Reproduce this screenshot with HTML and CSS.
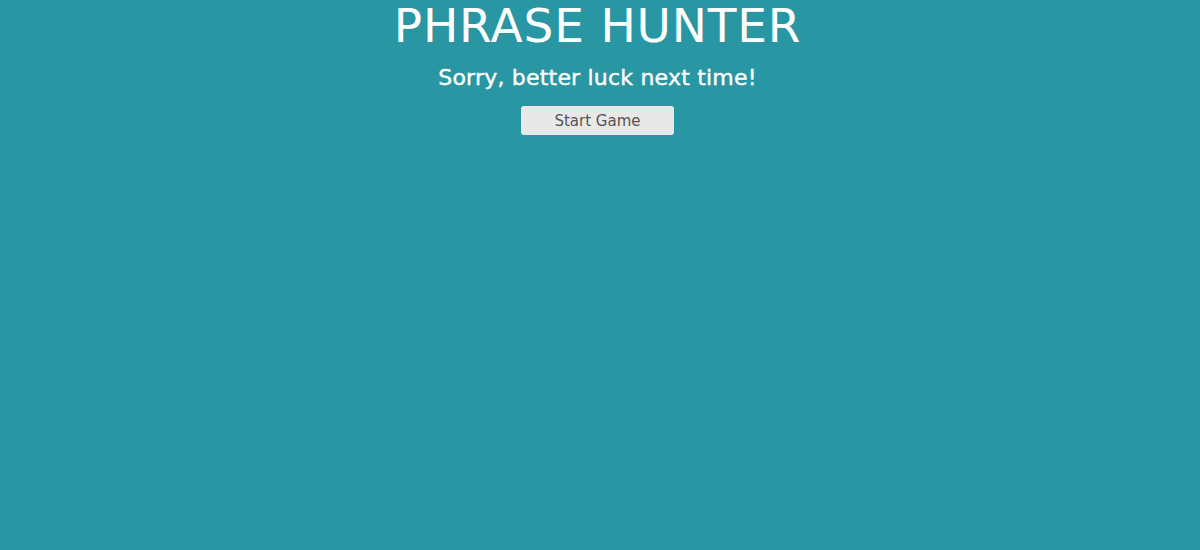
FILE: index.html
```html
<!DOCTYPE html>
<html>
<head>
<meta charset="utf-8">
<link rel="stylesheet" href="styles.css">
</head>
<body>
<div class="overlay">
  <h1 class="title">PHRASE HUNTER</h1>
  <h2 class="message">Sorry, better luck next time!</h2>
  <button class="btn-reset">Start Game</button>
</div>
</body>
</html>
```
FILE: styles.css
```css
html, body {
  margin: 0;
  height: 100%;
}
body {
  background: #2996a3;
  font-family: "DejaVu Sans", "Open Sans", sans-serif;
}
.overlay {
  display: flex;
  flex-direction: column;
  align-items: center;
  padding-right: 5px;
  color: #fff;
}
.title {
  margin: 0;
  font-size: 47px;
  font-weight: 400;
  line-height: 52px;
  letter-spacing: 0.8px;
}
.message {
  margin: 11px 0 0;
  font-size: 22px;
  font-weight: 500;
  line-height: 30px;
  letter-spacing: 0.2px;
  -webkit-text-stroke: 0.4px #fff;
}
.btn-reset {
  margin-top: 13px;
  width: 153px;
  height: 29px;
  border: none;
  border-radius: 3px;
  background: #e8e8e8;
  color: #555;
  font-family: inherit;
  font-size: 15px;
}
```
